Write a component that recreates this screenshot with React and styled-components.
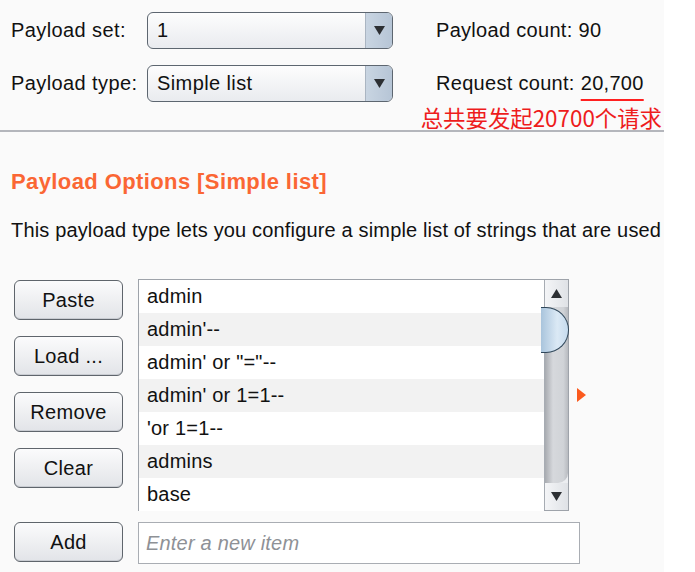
import React from "react";
import styled, { createGlobalStyle } from "styled-components";

const GlobalStyle = createGlobalStyle`
  body {
    margin: 0;
    background: #ffffff;
    font-family: "Liberation Sans", Arial, sans-serif;
    color: #111111;
  }
`;

const Panel = styled.div`
  width: 664px;
  height: 572px;
  background: #fafafa;
  overflow: hidden;
`;

const Top = styled.div`
  display: grid;
  grid-template-columns: 136px 246px 1fr;
  grid-template-rows: 53px 53px;
  align-items: center;
  padding: 4px 0 0 11px;
  height: 132px;
  box-sizing: border-box;
  border-bottom: 2px solid #b4b6bc;
  position: relative;
`;

const Label = styled.div`
  font-size: 20px;
  letter-spacing: 0.4px;
`;

const Combo = styled.div`
  height: 37px;
  display: flex;
  border: 1px solid #5d6670;
  border-radius: 6px;
  overflow: hidden;
  background: linear-gradient(#fdfdfd, #e9ebef);
  box-sizing: border-box;
`;

const ComboValue = styled.div`
  flex: 1;
  padding-left: 9px;
  font-size: 20px;
  letter-spacing: 0.4px;
  display: flex;
  align-items: center;
`;

const ComboArrow = styled.div`
  width: 26px;
  border-left: 1px solid #aab5c2;
  background: linear-gradient(90deg, #c9d5e2, #b6c5d6);
  display: flex;
  align-items: center;
  justify-content: center;
`;

const Count = styled.div`
  font-size: 20px;
  letter-spacing: 0.3px;
  padding-left: 43px;
`;

const Num = styled.span`
  margin-left: 6px;
  text-decoration: ${(p) => (p.$marked ? "underline" : "none")};
  text-decoration-color: #ff2020;
  text-decoration-thickness: 2px;
  text-underline-offset: 9px;
`;

const Note = styled.div`
  position: absolute;
  right: 2px;
  bottom: 0;
  color: #ee1c1c;
  font-size: 22.4px;
  font-family: "Noto Sans CJK SC", "Liberation Sans", sans-serif;
  line-height: 26px;
`;

const Section = styled.div`
  padding: 37px 0 0 11px;
`;

const Heading = styled.div`
  color: #fa6634;
  font-weight: bold;
  font-size: 22px;
  letter-spacing: 0.4px;
`;

const Desc = styled.div`
  margin-top: 24px;
  font-size: 20px;
  letter-spacing: 0.16px;
  white-space: nowrap;
`;

const Editor = styled.div`
  display: grid;
  grid-template-columns: 109px 1fr;
  column-gap: 15px;
  margin-top: 37px;
  padding-left: 14px;
`;

const Buttons = styled.div`
  display: flex;
  flex-direction: column;
  gap: 16px;
  padding-top: 1px;
`;

const Btn = styled.div`
  height: 40px;
  box-sizing: border-box;
  border: 1px solid #5f656c;
  border-radius: 6px;
  background: linear-gradient(#fbfbfc, #e2e4e8);
  display: flex;
  align-items: center;
  justify-content: center;
  font-size: 20px;
  letter-spacing: 0.3px;
  box-shadow: inset 0 -1px 0 #c9ccd2;
`;

const ListRow = styled.div`
  display: flex;
  align-items: flex-start;
`;

const ListBox = styled.div`
  width: 431px;
  height: 232px;
  box-sizing: border-box;
  border: 1px solid #9ea3aa;
  background: #ffffff;
  display: flex;
`;

const Items = styled.div`
  flex: 1;
`;

const Item = styled.div`
  height: 33px;
  line-height: 33px;
  padding-left: 8px;
  font-size: 20px;
  letter-spacing: 0.2px;
  background: ${(p) => (p.$alt ? "#f2f2f2" : "#ffffff")};
`;

const Scroll = styled.div`
  width: 23px;
  border-left: 1px solid #a7acb3;
  background: #eceef1;
  display: flex;
  flex-direction: column;
`;

const ScrollBtn = styled.div`
  height: 27px;
  display: flex;
  align-items: center;
  justify-content: center;
  background: linear-gradient(90deg, #f4f5f7, #dfe2e6);
`;

const Track = styled.div`
  flex: 1;
  background: linear-gradient(90deg, #a8abb0, #d6d8dc 35%, #d0d3d7 80%, #b8bbc0);
  border-radius: 0 0 10px 0;
  display: flex;
  flex-direction: column;
`;

const Thumb = styled.div`
  height: 44px;
  margin-left: -4px;
  margin-right: -1px;
  border: 1.5px solid #2f4659;
  border-left: none;
  border-radius: 0 24px 24px 0;
  background: linear-gradient(90deg, #a9c4dc, #dbe9f5 60%, #c6dbee);
`;

const Marker = styled.div`
  margin: 109px 0 0 8px;
  width: 0;
  height: 0;
  border-top: 7px solid transparent;
  border-bottom: 7px solid transparent;
  border-left: 9px solid #fb5a1e;
`;

const AddRow = styled.div`
  display: grid;
  grid-template-columns: 109px 442px;
  column-gap: 15px;
  margin-top: 11px;
  padding-left: 14px;
`;

const Input = styled.div`
  height: 42px;
  box-sizing: border-box;
  border: 1px solid #a9adb3;
  background: #ffffff;
  display: flex;
  align-items: center;
  padding-left: 7px;
  font-size: 20px;
  letter-spacing: 0.2px;
  font-style: italic;
  color: #8e9196;
`;

const Tri = ({ up }) => (
  <svg width="11" height="9" viewBox="0 0 11 9">
    <polygon points={up ? "5.5,0 11,9 0,9" : "0,0 11,0 5.5,9"} fill="#2c2f33" />
  </svg>
);

const items = [
  "admin",
  "admin'--",
  "admin' or \"=\"--",
  "admin' or 1=1--",
  "'or 1=1--",
  "admins",
  "base",
];

export default function App() {
  return (
    <>
      <GlobalStyle />
      <Panel>
        <Top>
          <Label>Payload set:</Label>
          <Combo>
            <ComboValue>1</ComboValue>
            <ComboArrow>
              <Tri />
            </ComboArrow>
          </Combo>
          <Count>
            Payload count:<Num>90</Num>
          </Count>
          <Label>Payload type:</Label>
          <Combo>
            <ComboValue>Simple list</ComboValue>
            <ComboArrow>
              <Tri />
            </ComboArrow>
          </Combo>
          <Count>
            Request count:<Num $marked>20,700</Num>
          </Count>
          <Note>总共要发起20700个请求</Note>
        </Top>
        <Section>
          <Heading>Payload Options [Simple list]</Heading>
          <Desc>This payload type lets you configure a simple list of strings that are used</Desc>
        </Section>
        <Editor>
          <Buttons>
            <Btn>Paste</Btn>
            <Btn>Load ...</Btn>
            <Btn>Remove</Btn>
            <Btn>Clear</Btn>
          </Buttons>
          <ListRow>
            <ListBox>
              <Items>
                {items.map((t, i) => (
                  <Item key={t} $alt={i % 2 === 1}>
                    {t}
                  </Item>
                ))}
              </Items>
              <Scroll>
                <ScrollBtn>
                  <Tri up />
                </ScrollBtn>
                <Track>
                  <Thumb />
                </Track>
                <ScrollBtn>
                  <Tri />
                </ScrollBtn>
              </Scroll>
            </ListBox>
            <Marker />
          </ListRow>
        </Editor>
        <AddRow>
          <Btn>Add</Btn>
          <Input>Enter a new item</Input>
        </AddRow>
      </Panel>
    </>
  );
}
